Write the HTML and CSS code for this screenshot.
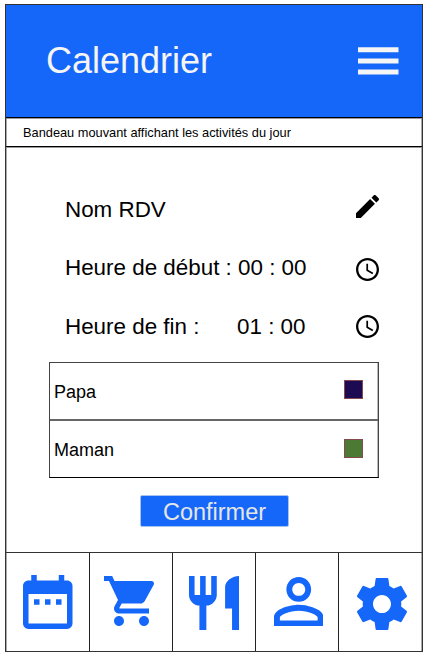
FILE: index.html
```html
<!DOCTYPE html>
<html lang="fr">
<head>
<meta charset="utf-8">
<title>Calendrier</title>
<link rel="stylesheet" href="styles.css">
</head>
<body>
<main class="screen">
  <header class="header">
    <h1 class="title">Calendrier</h1>
    <svg class="menu" viewBox="0 0 41 27" aria-hidden="true"><path d="M0 0h40.5v5H0zM0 11.2h40.5v5H0zM0 22.2h40.5v5H0z"/></svg>
  </header>
  <div class="ticker">Bandeau mouvant affichant les activités du jour</div>
  <section class="content">
    <div class="field name">
      <span>Nom RDV</span>
      <svg class="icon" viewBox="3 3 18 18"><path d="M3 17.25V21h3.75L17.81 9.94l-3.75-3.75L3 17.25zM20.71 7.04c.39-.39.39-1.02 0-1.41l-2.34-2.34c-.39-.39-1.02-.39-1.41 0l-1.83 1.83 3.75 3.75 1.83-1.83z"/></svg>
    </div>
    <div class="field start">
      <span>Heure de début : 00 : 00</span>
      <svg class="icon" viewBox="2 2 20 20"><path d="M11.99 2C6.47 2 2 6.48 2 12s4.47 10 9.99 10C17.52 22 22 17.52 22 12S17.52 2 11.99 2zM12 20c-4.42 0-8-3.58-8-8s3.58-8 8-8 8 3.58 8 8-3.58 8-8 8zm.5-13H11v6l5.25 3.15.75-1.23-4.5-2.67z"/></svg>
    </div>
    <div class="field end">
      <span class="end-label">Heure de fin :</span>
      <span>01 : 00</span>
      <svg class="icon" viewBox="2 2 20 20"><path d="M11.99 2C6.47 2 2 6.48 2 12s4.47 10 9.99 10C17.52 22 22 17.52 22 12S17.52 2 11.99 2zM12 20c-4.42 0-8-3.58-8-8s3.58-8 8-8 8 3.58 8 8-3.58 8-8 8zm.5-13H11v6l5.25 3.15.75-1.23-4.5-2.67z"/></svg>
    </div>
    <ul class="people">
      <li class="person"><span>Papa</span><span class="swatch navy"></span></li>
      <li class="person"><span>Maman</span><span class="swatch green"></span></li>
    </ul>
    <button class="confirm" type="button">Confirmer</button>
  </section>
  <nav class="nav">
    <a class="tab"><svg class="calendar" viewBox="3 2 18 20" preserveAspectRatio="none"><path d="M9 11H7v2h2v-2zm4 0h-2v2h2v-2zm4 0h-2v2h2v-2zm2-7h-1V2h-2v2H8V2H6v2H5c-1.11 0-1.99.9-1.99 2L3 20c0 1.1.89 2 2 2h14c1.1 0 2-.9 2-2V6c0-1.1-.9-2-2-2zm0 16H5V9h14v11z"/></svg></a>
    <a class="tab"><svg class="cart" viewBox="1 2 20 20" preserveAspectRatio="none"><path d="M7 18c-1.1 0-1.99.9-1.99 2S5.9 22 7 22s2-.9 2-2-.9-2-2-2zM1 2v2h2l3.6 7.59-1.35 2.45c-.16.28-.25.61-.25.96 0 1.1.9 2 2 2h12v-2H7.42c-.14 0-.25-.11-.25-.25l.03-.12.9-1.63h7.45c.75 0 1.41-.41 1.75-1.03l3.58-6.49c.08-.14.12-.31.12-.48 0-.55-.45-1-1-1H5.21l-.94-2H1zm16 16c-1.1 0-1.99.9-1.99 2s.89 2 1.99 2 2-.9 2-2-.9-2-2-2z"/></svg></a>
    <a class="tab"><svg class="meal" viewBox="3 2 18 20" preserveAspectRatio="none"><path d="M11 9H9V2H7v7H5V2H3v7c0 2.12 1.66 3.84 3.75 3.97V22h2.5v-9.03C11.34 12.84 13 11.12 13 9V2h-2v7zm5-3v8h2.5v8H21V2c-2.76 0-5 2.24-5 4z"/></svg></a>
    <a class="tab"><svg class="profile" viewBox="4 4 16 16" preserveAspectRatio="none"><path d="M12 5.9c1.16 0 2.1.94 2.1 2.1s-.94 2.1-2.1 2.1S9.9 9.16 9.9 8s.94-2.1 2.1-2.1m0 9c2.97 0 6.1 1.46 6.1 2.1v1.1H5.9V17c0-.64 3.13-2.1 6.1-2.1M12 4C9.79 4 8 5.79 8 8s1.79 4 4 4 4-1.79 4-4-1.79-4-4-4zm0 9c-2.67 0-8 1.34-8 4v3h16v-3c0-2.66-5.33-4-8-4z"/></svg></a>
    <a class="tab"><svg class="settings" viewBox="2.27 2 19.46 20" preserveAspectRatio="none"><path d="M19.43 12.98c.04-.32.07-.64.07-.98s-.03-.66-.07-.98l2.11-1.65c.19-.15.24-.42.12-.64l-2-3.46c-.12-.22-.39-.3-.61-.22l-2.49 1c-.52-.4-1.08-.73-1.69-.98l-.38-2.65C14.46 2.18 14.25 2 14 2h-4c-.25 0-.46.18-.49.42l-.38 2.65c-.61.25-1.17.59-1.69.98l-2.49-1c-.23-.09-.49 0-.61.22l-2 3.46c-.13.22-.07.49.12.64l2.11 1.65c-.04.32-.07.65-.07.98s.03.66.07.98l-2.11 1.65c-.19.15-.24.42-.12.64l2 3.46c.12.22.39.3.61.22l2.49-1c.52.4 1.08.73 1.69.98l.38 2.65c.03.24.24.42.49.42h4c.25 0 .46-.18.49-.42l.38-2.65c.61-.25 1.17-.59 1.69-.98l2.49 1c.23.09.49 0 .61-.22l2-3.46c.12-.22.07-.49-.12-.64l-2.11-1.65zM12 15.5c-1.93 0-3.5-1.57-3.5-3.5s1.57-3.5 3.5-3.5 3.5 1.57 3.5 3.5-1.57 3.5-3.5 3.5z"/></svg></a>
  </nav>
</main>
</body>
</html>
```
FILE: styles.css
```css
* { box-sizing: border-box; }
body {
  margin: 0;
  padding: 4px 0 0 5px;
  background: #fff;
  color: #000;
  font-family: "Liberation Sans", Arial, sans-serif;
}
svg { display: block; flex: none; }
.screen {
  display: flex;
  flex-direction: column;
  width: 418px;
  height: 648px;
  border: 1px solid #333;
  box-shadow: inset 1px 0 #aaa, inset -1px 0 #aaa;
}
.header {
  display: flex;
  align-items: center;
  justify-content: space-between;
  height: 113px;
  padding: 0 23px 0 40px;
  background: #1467f8;
  border-bottom: 1px solid #000;
}
.title { margin: 0; font-size: 36px; font-weight: 400; line-height: 42px; color: #f5f5f5; }
.menu { width: 41px; height: 27.5px; fill: #f5f5f5; }
.ticker {
  height: 29px;
  padding-left: 17px;
  border-bottom: 1px solid #000;
  box-shadow: inset 0 1px #999, 0 1px #999;
  font-size: 12.8px;
  line-height: 30px;
  white-space: nowrap;
}
.content { flex: 1; padding: 47px 43px 0; }
.field {
  display: flex;
  align-items: center;
  height: 30px;
  padding-left: 16px;
  font-size: 22.4px;
  line-height: 28px;
  white-space: pre;
}
.field span { padding-top: 2px; }
.start { margin-top: 28px; }
.end { margin-top: 29px; }
.end-label { width: 172px; }
.icon { width: 23px; height: 23px; margin-left: auto; }
.name .icon { margin-bottom: 5px; }
.start .icon { margin-top: 5px; }
.people {
  width: 330px;
  height: 116px;
  margin: 21px 0 0;
  padding: 0;
  border: 1px solid #444;
  border-bottom-color: #000;
  box-shadow: inset -1px 0 #bbb;
  list-style: none;
}
.person {
  display: flex;
  align-items: center;
  justify-content: space-between;
  height: 56px;
  padding: 2px 15px 0 4px;
  font-size: 18px;
}
.person + .person { height: 58px; border-top: 2px solid #666; }
.swatch { width: 19px; height: 19px; margin-bottom: 5px; border: 1px solid #854a50; }
.person + .person .swatch { margin-bottom: 4px; }
.navy { background: #1c0a52; }
.green { background: #4c7a34; }
.confirm {
  display: block;
  width: 149px;
  height: 32px;
  margin: 17px 0 0 91px;
  padding: 1px 0 0;
  border: 1px solid #aac3ee;
  border-radius: 2px;
  background: #1467f8;
  color: #e6e6e6;
  font: 23.5px/30px "Liberation Sans", Arial, sans-serif;
}
.nav {
  display: grid;
  grid-template-columns: 83px 83px 83px 83px 1fr;
  height: 99px;
  border-top: 1px solid #333;
  fill: #1467f8;
}
.tab { display: flex; align-items: flex-start; }
.tab + .tab { border-left: 1px solid #222; }
.calendar { width: 49.5px; height: 54px; margin: 22px 0 0 17.3px; }
.cart { width: 50px; height: 50px; margin: 22.5px 0 0 14px; }
.meal { width: 50px; height: 54px; margin: 23px 0 0 16.2px; }
.profile { width: 49.5px; height: 49.5px; margin: 23.5px 0 0 17.5px; }
.settings { width: 50px; height: 52px; margin: 25px 0 0 18px; }
```
